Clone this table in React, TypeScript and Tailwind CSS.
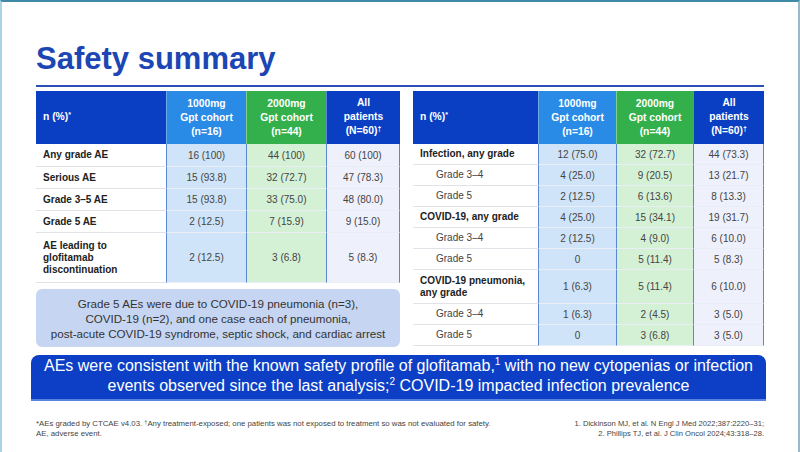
import React from "react";

type Row = { label: React.ReactNode; v: string[]; h: string; bold: boolean };

const leftRows: Row[] = [
  { label: "Any grade AE", v: ["16 (100)", "44 (100)", "60 (100)"], h: "h-[23px]", bold: true },
  { label: "Serious AE", v: ["15 (93.8)", "32 (72.7)", "47 (78.3)"], h: "h-[22px]", bold: true },
  { label: "Grade 3–5 AE", v: ["15 (93.8)", "33 (75.0)", "48 (80.0)"], h: "h-[22px]", bold: true },
  { label: "Grade 5 AE", v: ["2 (12.5)", "7 (15.9)", "9 (15.0)"], h: "h-[22px]", bold: true },
  {
    label: (
      <>
        AE leading to
        <br />
        glofitamab
        <br />
        discontinuation
      </>
    ),
    v: ["2 (12.5)", "3 (6.8)", "5 (8.3)"],
    h: "h-[50px]",
    bold: true,
  },
];

const rightRows: Row[] = [
  { label: "Infection, any grade", v: ["12 (75.0)", "32 (72.7)", "44 (73.3)"], h: "h-[21px]", bold: true },
  { label: "Grade 3–4", v: ["4 (25.0)", "9 (20.5)", "13 (21.7)"], h: "h-[21px]", bold: false },
  { label: "Grade 5", v: ["2 (12.5)", "6 (13.6)", "8 (13.3)"], h: "h-[21px]", bold: false },
  { label: "COVID-19, any grade", v: ["4 (25.0)", "15 (34.1)", "19 (31.7)"], h: "h-[21px]", bold: true },
  { label: "Grade 3–4", v: ["2 (12.5)", "4 (9.0)", "6 (10.0)"], h: "h-[21px]", bold: false },
  { label: "Grade 5", v: ["0", "5 (11.4)", "5 (8.3)"], h: "h-[21px]", bold: false },
  {
    label: (
      <>
        COVID-19 pneumonia,
        <br />
        any grade
      </>
    ),
    v: ["1 (6.3)", "5 (11.4)", "6 (10.0)"],
    h: "h-[34px]",
    bold: true,
  },
  { label: "Grade 3–4", v: ["1 (6.3)", "2 (4.5)", "3 (5.0)"], h: "h-[21px]", bold: false },
  { label: "Grade 5", v: ["0", "3 (6.8)", "3 (5.0)"], h: "h-[21px]", bold: false },
];

const valBg = ["bg-[#cfe4f8]", "bg-[#d4f1d6]", "bg-[#eef0fb]"];

function Header({ cols }: { cols: string }) {
  return (
    <div className={`grid ${cols} h-[53px] text-white font-bold text-[10.3px] leading-[14px]`}>
      <div className="bg-[#0b3fc3] flex items-center pl-[7px]">
        <span>
          n (%)<span className="text-[7px] relative -top-[3px]">*</span>
        </span>
      </div>
      <div className="bg-[#2a8be6] flex items-center justify-center text-center border-l border-[#6fa9e8]">
        1000mg
        <br />
        Gpt cohort
        <br />
        (n=16)
      </div>
      <div className="bg-[#33b04b] flex items-center justify-center text-center border-l border-[#7fcf8e]">
        2000mg
        <br />
        Gpt cohort
        <br />
        (n=44)
      </div>
      <div className="bg-[#0b3fc3] flex items-center justify-center text-center border-l border-[#5f86da]">
        <span>
          All
          <br />
          patients
          <br />
          (N=60)<span className="text-[7px] relative -top-[3px]">†</span>
        </span>
      </div>
    </div>
  );
}

function Body({ rows, cols, indent }: { rows: Row[]; cols: string; indent: boolean }) {
  return (
    <div className="flex flex-col">
      {rows.map((r, i) => (
        <div key={i} className={`grid ${cols} ${r.h} text-[10px]`}>
          <div
            className={`flex items-center bg-white border-b border-[#e1e3e8] leading-[12px] ${
              r.bold ? "font-bold text-[#222]" : "text-[#444]"
            } ${!r.bold && indent ? "pl-[23px]" : "pl-[7px]"}`}
          >
            <span>{r.label}</span>
          </div>
          {r.v.map((v, j) => (
            <div
              key={j}
              className={`flex items-center justify-center text-[#444] border-l border-l-[#5a86d4] border-b border-b-[#e9edf4] ${valBg[j]} ${
                j === 2 ? "border-r border-r-[#5a86d4]" : ""
              }`}
            >
              {v}
            </div>
          ))}
        </div>
      ))}
    </div>
  );
}

export default function App() {
  return (
    <div
      className="w-[800px] h-[452px] bg-white border-t-2 border-t-[#3f8aa9] border-l-2 border-l-[#a9d4e4] border-r-2 border-r-[#9ab8c8] px-[34px] pt-[39px] overflow-hidden flex flex-col"
      style={{ fontFamily: '"Liberation Sans", Arial, sans-serif' }}
    >
      <h1 className="text-[31px] leading-[36px] font-bold text-[#1b46b4]">Safety summary</h1>
      <div className="mt-[8px] h-[2px] bg-[#2c50b8]" />
      <div className="mt-[4px] flex gap-[13px]">
        <div className="w-[364px] flex flex-col">
          <Header cols="grid-cols-[130px_80px_80px_74px]" />
          <Body rows={leftRows} cols="grid-cols-[130px_80px_80px_74px]" indent={false} />
          <div className="mt-[6px] h-[58px] rounded-[6px] bg-[#c6d6f2] flex items-center justify-center text-center text-[11.6px] leading-[15px] text-[#333]">
            <p>
              Grade 5 AEs were due to COVID-19 pneumonia (n=3),
              <br />
              COVID-19 (n=2), and one case each of pneumonia,
              <br />
              post-acute COVID-19 syndrome, septic shock, and cardiac arrest
            </p>
          </div>
        </div>
        <div className="w-[351px] flex flex-col">
          <Header cols="grid-cols-[125px_78px_77px_71px]" />
          <Body rows={rightRows} cols="grid-cols-[125px_78px_77px_71px]" indent={true} />
        </div>
      </div>
      <div className="mt-[8px] -ml-[5px] w-[735px] h-[46px] rounded-t-[8px] bg-[#0c3fc6] border-b-2 border-b-[#5a82e0] flex items-center justify-center text-center text-white text-[16px] leading-[18px]">
        <p>
          AEs were consistent with the known safety profile of glofitamab,
          <span className="text-[10px] relative -top-[6px]">1</span> with no new cytopenias or infection
          <br />
          events observed since the last analysis;<span className="text-[10px] relative -top-[6px]">2</span>{" "}
          COVID-19 impacted infection prevalence
        </p>
      </div>
      <div className="mt-[18px] flex justify-between leading-[10px] text-[#444]">
        <p className="text-[7.8px]">
          *AEs graded by CTCAE v4.03. <span className="text-[5.5px] relative -top-[2px]">†</span>Any
          treatment-exposed; one patients was not exposed to treatment so was not evaluated for safety.
          <br />
          AE, adverse event.
        </p>
        <p className="text-right text-[7.6px]">
          1. Dickinson MJ, et al. N Engl J Med 2022;387:2220–31;
          <br />
          2. Phillips TJ, et al. J Clin Oncol 2024;43:318–28.
        </p>
      </div>
    </div>
  );
}
